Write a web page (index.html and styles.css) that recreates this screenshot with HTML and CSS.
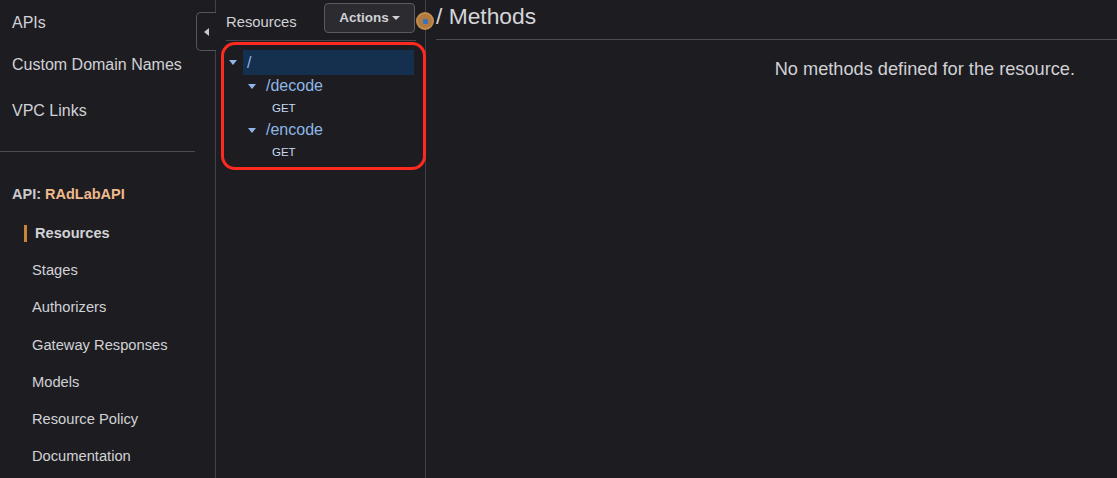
FILE: index.html
```html
<!DOCTYPE html>
<html>
<head>
<meta charset="utf-8">
<link rel="stylesheet" href="styles.css">
</head>
<body>
<div class="app">
  <nav class="sidebar">
    <div class="top-links">
      <a class="top-link">APIs</a>
      <a class="top-link">Custom Domain Names</a>
      <a class="top-link">VPC Links</a>
    </div>
    <div class="divider"></div>
    <div class="api-title">API: <span class="api-name">RAdLabAPI</span></div>
    <ul class="sub-links">
      <li class="sub-link active">Resources</li>
      <li class="sub-link">Stages</li>
      <li class="sub-link">Authorizers</li>
      <li class="sub-link">Gateway Responses</li>
      <li class="sub-link">Models</li>
      <li class="sub-link">Resource Policy</li>
      <li class="sub-link">Documentation</li>
    </ul>
    <button class="collapse-btn"><svg width="6" height="8" viewBox="0 0 6 8"><path d="M5 0 L0 4 L5 8 Z" fill="#c8c8cc"/></svg></button>
  </nav>
  <section class="tree-panel">
    <div class="tree-head">
      <span class="tree-title">Resources</span>
      <button class="actions-btn">Actions<span class="caret"></span></button>
    </div>
    <div class="tree-box">
      <div class="row selected lvl0"><span class="tri"></span><span class="path">/</span></div>
      <div class="row lvl1"><span class="tri"></span><span class="path">/decode</span></div>
      <div class="row method">GET</div>
      <div class="row lvl1"><span class="tri"></span><span class="path">/encode</span></div>
      <div class="row method">GET</div>
    </div>
    <span class="dot"></span>
  </section>
  <main class="main">
    <h1 class="main-title">/ Methods</h1>
    <p class="empty">No methods defined for the resource.</p>
  </main>
</div>
</body>
</html>
```
FILE: styles.css
```css
* { box-sizing: border-box; }
html, body { margin: 0; padding: 0; }
body {
  background: #1d1d21;
  font-family: "Liberation Sans", Arial, sans-serif;
  color: #d1d1d6;
  width: 1117px;
  height: 478px;
  overflow: hidden;
}
.app { display: flex; height: 478px; }
.sidebar {
  position: relative;
  width: 216px;
  flex: none;
  border-right: 1px solid #414148;
}
.top-links { display: flex; flex-direction: column; padding-top: 13px; }
.top-link { font-size: 16px; padding-left: 12px; height: 43px; line-height: 20px; color: #d1d1d6; }
.top-link:first-child { height: 42px; }
.top-link:nth-child(2) { height: 46px; }
.divider { height: 1px; background: #4a4a52; width: 195px; margin-top: 7px; }
.api-title { font-size: 14.5px; font-weight: bold; padding-left: 12px; margin-top: 34px; line-height: 17px; color: #c9c9ce; }
.api-name { color: #efb98c; }
.sub-links { list-style: none; margin: 22px 0 0 0; padding: 0; }
.sub-link { font-size: 14.7px; height: 37.2px; line-height: 17px; padding-left: 32px; color: #d1d1d6; }
.sub-link.active { font-weight: bold; font-size: 14.6px; padding-left: 35px; position: relative; }
.sub-link.active::before { content: ""; position: absolute; left: 24px; top: 0px; width: 3px; height: 17px; background: #c7843b; }
.collapse-btn {
  position: absolute; right: -1px; top: 12px;
  width: 20px; height: 39px;
  border: 1px solid #55555c; border-right: none;
  border-radius: 5px 0 0 5px;
  background: #1d1d21;
  display: flex; align-items: center; justify-content: center;
  padding: 0;
}
.tree-panel {
  position: relative;
  width: 210px; flex: none;
  border-right: 1px solid #414148;
  padding: 3px 10px 0 10px;
}
.tree-head {
  display: flex; justify-content: space-between; align-items: center;
  height: 38px; border-bottom: 1px solid #46464d; padding-bottom: 8px;
  margin-right: -1px;
}
.tree-title { font-size: 14.8px; padding-top: 8px; }
.actions-btn {
  width: 91px; height: 30px;
  background: #2b2b30; border: 1px solid #5a5a60; border-radius: 4px;
  color: #d1d1d6; font-family: inherit; font-weight: bold; font-size: 13.5px;
  display: flex; align-items: center; justify-content: center; gap: 3px;
  margin-top: 0px; margin-right: 1px;
}
.caret { width: 0; height: 0; border-left: 4px solid transparent; border-right: 4px solid transparent; border-top: 4px solid #d1d1d6; }
.tree-box {
  margin: 1px -11px 0 -5px;
  border: 3px solid #ff2a1f;
  border-radius: 14px;
  height: 128px;
  padding: 5px 9px 0 3px;
}
.row { display: flex; align-items: center; height: 22px; color: #8fb6e6; font-size: 16px; }
.row.selected { background: #15304e; margin-left: 16px; margin-right: 0; height: 25px; position: relative; }
.row.lvl0 .tri { position: absolute; left: -14px; }
.row.lvl0 .path { padding-left: 4px; }
.row.lvl1 { padding-left: 21px; }
.row.lvl1 .tri { margin-right: 10px; }
.row.method { padding-left: 45px; font-size: 11.5px; color: #c9d9ef; height: 22px; }
.tri { width: 0; height: 0; border-left: 4px solid transparent; border-right: 4px solid transparent; border-top: 5px solid #8fb6e6; }
.dot {
  position: absolute; right: -9px; top: 12px;
  width: 18px; height: 18px; border-radius: 50%;
  background: #b07a40; border: 2px solid #c48c4c;
  display: flex; align-items: center; justify-content: center;
}
.dot::after { content: ""; width: 5px; height: 5px; background: #3a74b8; border-radius: 1px; }
.main { flex: 1; padding: 0 0 0 10px; }
.main-title {
  margin: 0; font-weight: normal; font-size: 22.8px; line-height: 26px;
  padding-top: 3px; height: 40px; border-bottom: 1px solid #4a4a52; color: #d5d5d9;
}
.empty { margin: 19px 42px 0 0; text-align: right; font-size: 18.2px; color: #d1d1d6; }
```
